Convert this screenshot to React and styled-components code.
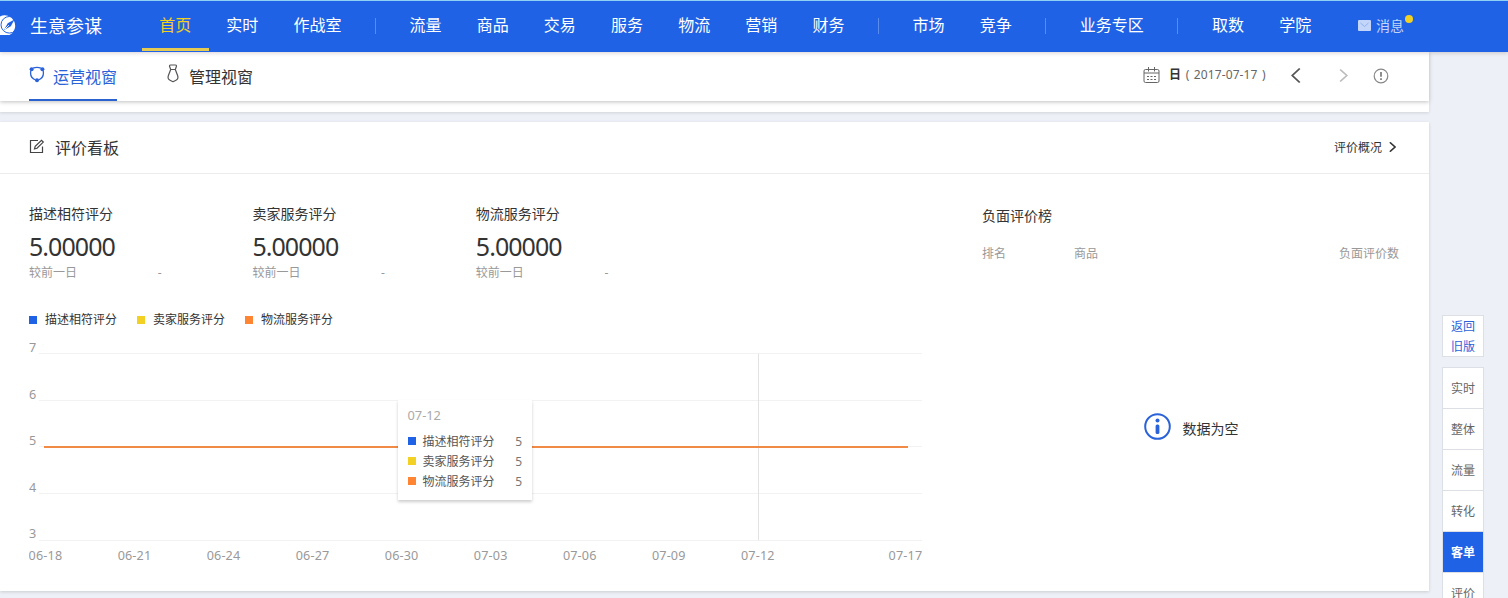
import React, { useState } from 'react';
import styled, { createGlobalStyle } from 'styled-components';

const GlobalStyle = createGlobalStyle`
  * {
    box-sizing: border-box;
  }

  body {
    margin: 0;
    height: 598px;
    overflow: hidden;
    background: #edf0f6;
    color: #333;
    font-family: "Noto Sans", "Noto Sans CJK SC", sans-serif;
    font-size: 12px;
  }

  svg {
    display: block;
    flex: none;
  }
`;

const Page = styled.div`
  display: flex;
  flex-direction: column;
  width: 1508px;
  height: 598px;
  overflow: hidden;
`;

const Navbar = styled.header`
  display: flex;
  flex: none;
  height: 52px;
  background: #1f62e6;
  border-top: 1px solid #8fd0f7;
  box-shadow: 0 1px 4px rgba(60, 30, 40, 0.2);
  position: relative;
  z-index: 2;
`;

const Brand = styled.div`
  display: flex;
  align-items: center;
  width: 141.6px;
  padding-bottom: 3px;
  gap: 10px;
  color: #fff;
  font-size: 18px;
  white-space: nowrap;
`;

const NavItem = styled.a`
  height: 50px;
  padding: 0 17.57px;
  line-height: 49px;
  font-size: 16px;
  white-space: nowrap;
  color: ${(p) => (p.$active ? '#f3d024' : '#fff')};
  border-bottom: 3px solid ${(p) => (p.$active ? '#e6cb52' : 'transparent')};
`;

const NavDivider = styled.span`
  width: 1px;
  height: 16px;
  margin: 17px 16px 0;
  background: #5a8cee;
`;

const Messages = styled.div`
  display: flex;
  align-items: center;
  height: 48px;
  margin-left: 29.4px;
  gap: 5px;
  color: #c3d6fa;
  font-size: 14px;
`;

const UnreadDot = styled.i`
  width: 8px;
  height: 8px;
  margin: -13px 0 0 -4px;
  border-radius: 50%;
  background: #f3d024;
`;

const Layout = styled.div`
  display: flex;
  flex: 1;
  min-height: 0;
`;

const Main = styled.main`
  width: 1429px;
  flex: none;
`;

const SubNav = styled.div`
  display: flex;
  justify-content: space-between;
  height: 49px;
  padding: 0 40px 0 29px;
  background: #fff;
  box-shadow: 0 1px 4px rgba(0, 0, 0, 0.25);
  position: relative;
`;

const Tabs = styled.div`
  display: flex;
  gap: 49px;
`;

const Tab = styled.a`
  display: flex;
  align-items: center;
  gap: ${(p) => (p.$active ? 8 : 9)}px;
  height: 49px;
  color: ${(p) => (p.$active ? '#2a62d9' : '#333')};
  border-bottom: 2px solid ${(p) => (p.$active ? '#2a62d0' : 'transparent')};
  font-size: 16px;
  white-space: nowrap;

  svg {
    margin-bottom: ${(p) => (p.$active ? 2 : 4)}px;
  }
`;

const DateTools = styled.div`
  display: flex;
  align-items: center;
  height: 46px;
  color: #666;
`;

const DateLabel = styled.span`
  width: 97px;
  margin: -2px 0 0 9px;
  letter-spacing: 0.1px;
  word-spacing: 1.3px;
  white-space: nowrap;

  b {
    color: #333;
    font-weight: 600;
  }
`;

const PrevButton = styled.span`
  margin-left: 25px;
`;

const NextButton = styled.span`
  margin: 0 25px 0 38px;
`;

const PreviousCard = styled.div`
  height: 11px;
  background: #fff;
  box-shadow: 0 1px 3px rgba(0, 0, 0, 0.12);
`;

const Card = styled.section`
  height: 469px;
  margin-top: 10px;
  background: #fff;
  box-shadow: 0 1px 3px rgba(0, 0, 0, 0.15);
`;

const CardHeader = styled.div`
  display: flex;
  align-items: center;
  justify-content: space-between;
  height: 52px;
  padding: 0 33px 2px 29px;
  border-bottom: 1px solid #ececec;
`;

const CardTitle = styled.div`
  display: flex;
  align-items: center;
  gap: 10px;
  font-size: 16px;
`;

const MoreLink = styled.a`
  display: flex;
  align-items: center;
  gap: 7px;
`;

const CardBody = styled.div`
  display: flex;
  padding: 30px 30px 0 29px;
`;

const ScorePanel = styled.div`
  width: 953px;
`;

const Scores = styled.div`
  display: flex;
`;

const Score = styled.div`
  width: 223.4px;
`;

const ScoreName = styled.div`
  line-height: 20px;
  font-size: 14px;
`;

const ScoreValue = styled.div`
  margin-top: 5px;
  line-height: 35px;
  font-size: 25px;
  letter-spacing: -0.95px;
`;

const ScoreCompare = styled.div`
  display: flex;
  justify-content: space-between;
  width: 132.5px;
  margin-top: 1px;
  line-height: 16px;
  color: #999;
`;

const Legend = styled.div`
  display: flex;
  gap: 20px;
  height: 20px;
  margin-top: 29px;
`;

const LegendItem = styled.span`
  display: flex;
  align-items: center;
  gap: 8px;
  line-height: 20px;
`;

const Swatch = styled.i`
  width: 8px;
  height: 8px;
  background: ${(p) => p.$color};
`;

const ChartArea = styled.div`
  position: relative;

  text {
    fill: #999;
    font-size: 12.6px;
  }
`;

const Tooltip = styled.div`
  position: absolute;
  left: 369px;
  top: 70px;
  width: 134px;
  height: 100px;
  padding: 5px 10px 0 9.5px;
  background: #fff;
  box-shadow: 0 2px 3px rgba(0, 0, 0, 0.2);
`;

const TooltipDate = styled.div`
  height: 26px;
  line-height: 20px;
  color: #aaa;
  font-size: 12.8px;
`;

const TooltipRow = styled.div`
  display: flex;
  align-items: center;
  height: 20px;
  gap: 7px;
  color: #555;

  b {
    margin-left: auto;
    font-weight: 400;
    color: #777;
  }
`;

const RankPanel = styled.div`
  flex: 1;
`;

const RankTitle = styled.div`
  margin-top: 2px;
  line-height: 20px;
  font-size: 14px;
`;

const RankHead = styled.div`
  display: grid;
  grid-template-columns: 92px 1fr auto;
  margin-top: 18px;
  line-height: 20px;
  color: #999;
`;

const Empty = styled.div`
  display: flex;
  align-items: center;
  justify-content: center;
  gap: 12px;
  height: 28px;
  margin-top: 148px;
  padding-left: 1px;
  font-size: 14px;

  span {
    padding-top: 3px;
  }
`;

const SideRail = styled.aside`
  width: 42px;
  margin: 263px 0 0 13px;
`;

const BackLink = styled.a`
  display: block;
  height: 42px;
  padding: 1px 8px;
  border: 1px solid #dcdfe5;
  background: #fff;
  color: #2a62d9;
  line-height: 20px;
`;

const Anchors = styled.nav`
  margin-top: 10px;
  border: 1px solid #dcdfe5;
`;

const Anchor = styled.a`
  display: block;
  height: 41px;
  border-bottom: 1px solid #dcdfe5;
  background: ${(p) => (p.$active ? '#1f62e6' : '#fff')};
  color: ${(p) => (p.$active ? '#fff' : '#666')};
  font-weight: ${(p) => (p.$active ? 700 : 400)};
  line-height: 42px;
  text-align: center;
`;

const NAV_GROUPS = [
  ['首页', '实时', '作战室'],
  ['流量', '商品', '交易', '服务', '物流', '营销', '财务'],
  ['市场', '竞争'],
  ['业务专区'],
  ['取数', '学院'],
];

const SERIES = [
  { name: '描述相符评分', color: '#1f62e6', score: '5.00000', value: 5 },
  { name: '卖家服务评分', color: '#f3d024', score: '5.00000', value: 5 },
  { name: '物流服务评分', color: '#ff8533', score: '5.00000', value: 5 },
];

const Y_TICKS = [7, 6, 5, 4, 3];
const X_TICKS = ['06-18', '06-21', '06-24', '06-27', '06-30', '07-03', '07-06', '07-09', '07-12'];
const ANCHORS = ['实时', '整体', '流量', '转化', '客单', '评价'];

const LogoIcon = () => (
  <svg width="20" height="22" viewBox="0 0 20 22">
    <path d="M0 21V2.500A10.300 10.300 0 1 1 9.500 21Z" fill="#fff" />
    <circle cx="9.300" cy="10.800" r="8.300" fill="none" stroke="#1f62e6" strokeWidth="1" />
    <path d="M14.500 5.500 10.800 12.300 4 16l3.700-6.800Z" fill="#1f62e6" />
    <path d="m5 15 3.800-3.800" stroke="#fff" strokeWidth="1" />
  </svg>
);

const MailIcon = () => (
  <svg width="13" height="11" viewBox="0 0 13 11">
    <rect width="13" height="11" rx="1" fill="#c3d6fa" />
    <path d="m2.500 3 4 3.500 4-3.500" fill="none" stroke="#8fb1f4" />
  </svg>
);

const OperateIcon = () => (
  <svg width="16" height="17" viewBox="0 0 16 17" fill="none" stroke="#2a62d9" strokeWidth="1.300">
    <path d="M4 2.200Q8 .4 12 2.200M1.800 5C1 9 3 12.500 6.500 14M14.200 5C15 9 13 12.500 9.500 14" />
    <g fill="#2a62d9" stroke="none">
      <circle cx="2.600" cy="3.200" r="2" />
      <circle cx="13.400" cy="3.200" r="2" />
      <circle cx="8" cy="14.200" r="2" />
    </g>
  </svg>
);

const ManageIcon = () => (
  <svg width="14" height="19" viewBox="0 0 14 19" fill="none" stroke="#555" strokeWidth="1.200" strokeLinejoin="round">
    <path d="M4.500 1h5c1 0 1.200 1 .8 1.800L9.300 5.500H4.700L3.700 2.800C3.300 2 3.500 1 4.500 1Z" />
    <path d="M4.700 5.500 2.400 11.500c-.9 2.500 0 3.900 1.600 4.700L7 17.700l3-1.500c1.600-.8 2.500-2.200 1.600-4.700L9.300 5.500" />
  </svg>
);

const CalendarIcon = () => (
  <svg width="17" height="17" viewBox="0 0 17 17" fill="none" stroke="#666">
    <rect x="1" y="2.500" width="15" height="13" rx="1.500" />
    <path d="M1 6h15M5.500 0v4.500M11.500 0v4.500" />
    <path d="M4 9.500h9M4 12.500h9" strokeWidth="1.200" strokeDasharray="2 1.500" />
  </svg>
);

const EditIcon = () => (
  <svg width="16" height="15" viewBox="0 0 16 15" fill="none" stroke="#444" strokeWidth="1.200">
    <path d="M9 1.500H1.500v12h12V7.500" />
    <path d="m5.500 10 .7-2.700 6.300-6 1.800 1.800L8 9.300Z" />
  </svg>
);

const Chevron = ({ width, height, color, left, stroke = 1.5 }) => (
  <svg width={width} height={height} viewBox="0 0 8 14" preserveAspectRatio="none" fill="none" stroke={color} strokeWidth={stroke}>
    <path d={left ? 'M7 .5 1 7l6 6.500' : 'm1 .5 6 6.500-6 6.500'} />
  </svg>
);

const NoticeIcon = () => (
  <svg width="16" height="18" viewBox="0 -2 16 18" fill="none" stroke="#888">
    <circle cx="8" cy="8" r="6.800" strokeWidth="1.200" />
    <path d="M8 4v4.800M8 10.200v1.800" strokeWidth="1.900" />
  </svg>
);

const InfoIcon = () => (
  <svg width="27" height="27" viewBox="0 0 27 27">
    <circle cx="13.500" cy="13.500" r="12.300" fill="none" stroke="#2a62d9" strokeWidth="2" />
    <circle cx="13.500" cy="7.500" r="2" fill="#2a62d9" />
    <rect x="11.600" y="11.500" width="3.800" height="9.500" rx="1.500" fill="#2a62d9" />
  </svg>
);

function ScoreChart() {
  return (
    <ChartArea>
      <svg width="900" height="240" viewBox="0 0 900 240">
        {Y_TICKS.map((tick, i) => (
          <g key={tick}>
            <path d={`M10 ${Math.round(23 + i * 46.7) + 0.5}H893`} stroke="#f2f2f2" />
            <text x="0" y={22 + i * 46.6}>{tick}</text>
          </g>
        ))}
        <path d="M729.500 24v186" stroke="#e2e2e2" />
        <path d="M15 117H879" stroke="#f08a44" strokeWidth="2" />
        {X_TICKS.map((tick, i) => (
          <text key={tick} x={i * 89.05 - 0.4} y="230" textLength="33.500">{tick}</text>
        ))}
        <text x="859.600" y="230" textLength="33.500">07-17</text>
      </svg>
      <Tooltip>
        <TooltipDate>07-12</TooltipDate>
        {SERIES.map((s) => (
          <TooltipRow key={s.name}>
            <Swatch $color={s.color} />
            {s.name}
            <b>{s.value}</b>
          </TooltipRow>
        ))}
      </Tooltip>
    </ChartArea>
  );
}

function App() {
  const [activeNav, setActiveNav] = useState('首页');
  const [activeAnchor, setActiveAnchor] = useState('客单');

  return (
    <Page>
      <GlobalStyle />
      <Navbar>
        <Brand>
          <LogoIcon />
          生意参谋
        </Brand>
        {NAV_GROUPS.map((group, i) => (
          <React.Fragment key={group[0]}>
            {i > 0 && <NavDivider />}
            {group.map((item) => (
              <NavItem key={item} $active={item === activeNav} onClick={() => setActiveNav(item)}>
                {item}
              </NavItem>
            ))}
          </React.Fragment>
        ))}
        <Messages>
          <MailIcon />
          消息
          <UnreadDot />
        </Messages>
      </Navbar>

      <Layout>
        <Main>
          <SubNav>
            <Tabs>
              <Tab $active>
                <OperateIcon />
                运营视窗
              </Tab>
              <Tab>
                <ManageIcon />
                管理视窗
              </Tab>
            </Tabs>
            <DateTools>
              <CalendarIcon />
              <DateLabel>
                <b>日</b> ( 2017-07-17 )
              </DateLabel>
              <PrevButton>
                <Chevron left width={10} height={15} color="#555" />
              </PrevButton>
              <NextButton>
                <Chevron width={9} height={13} color="#bbb" />
              </NextButton>
              <NoticeIcon />
            </DateTools>
          </SubNav>
          <PreviousCard />

          <Card>
            <CardHeader>
              <CardTitle>
                <EditIcon />
                评价看板
              </CardTitle>
              <MoreLink>
                评价概况
                <Chevron width={7} height={10} color="#333" stroke={2} />
              </MoreLink>
            </CardHeader>
            <CardBody>
              <ScorePanel>
                <Scores>
                  {SERIES.map((s) => (
                    <Score key={s.name}>
                      <ScoreName>{s.name}</ScoreName>
                      <ScoreValue>{s.score}</ScoreValue>
                      <ScoreCompare>
                        <span>较前一日</span>
                        <span>-</span>
                      </ScoreCompare>
                    </Score>
                  ))}
                </Scores>
                <Legend>
                  {SERIES.map((s) => (
                    <LegendItem key={s.name}>
                      <Swatch $color={s.color} />
                      {s.name}
                    </LegendItem>
                  ))}
                </Legend>
                <ScoreChart />
              </ScorePanel>
              <RankPanel>
                <RankTitle>负面评价榜</RankTitle>
                <RankHead>
                  <span>排名</span>
                  <span>商品</span>
                  <span>负面评价数</span>
                </RankHead>
                <Empty>
                  <InfoIcon />
                  <span>数据为空</span>
                </Empty>
              </RankPanel>
            </CardBody>
          </Card>
        </Main>

        <SideRail>
          <BackLink>返回旧版</BackLink>
          <Anchors>
            {ANCHORS.map((name) => (
              <Anchor key={name} $active={name === activeAnchor} onClick={() => setActiveAnchor(name)}>
                {name}
              </Anchor>
            ))}
          </Anchors>
        </SideRail>
      </Layout>
    </Page>
  );
}

export default App;
